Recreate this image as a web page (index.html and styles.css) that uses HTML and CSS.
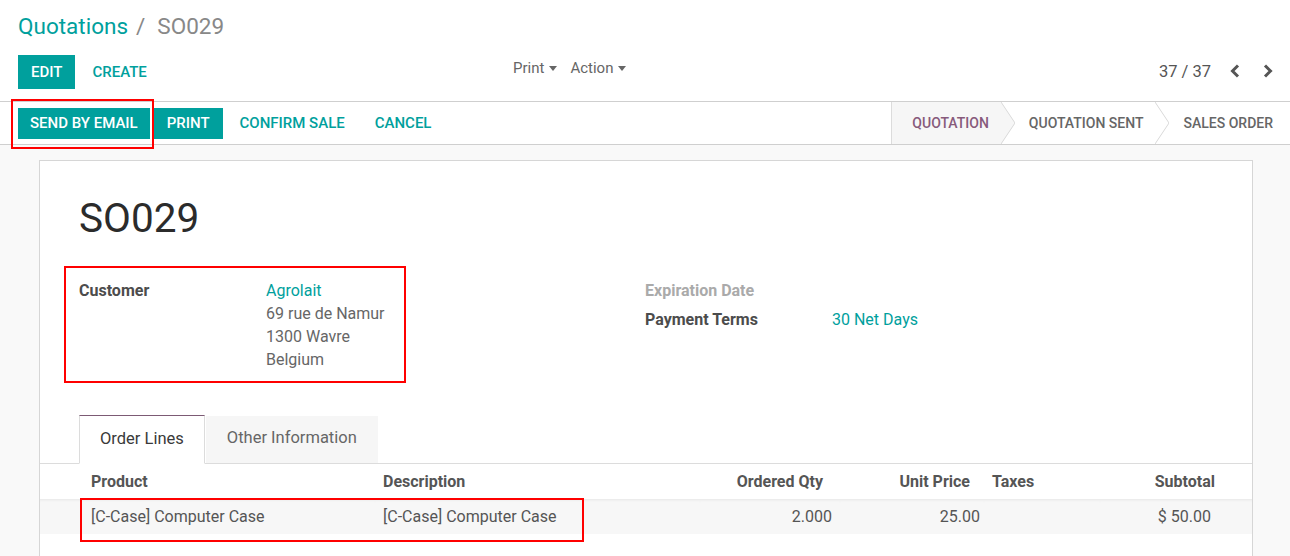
FILE: index.html
```html
<!DOCTYPE html>
<html lang="en">
<head>
<meta charset="utf-8">
<title>Quotations / SO029</title>
<link rel="stylesheet" href="styles.css">
</head>
<body>
<div class="cp">
  <div class="breadcrumb"><a class="crumb-link">Quotations</a><span class="crumb-sep">/</span><span class="crumb-cur">SO029</span></div>
  <div class="cp-bar">
    <div class="cp-left">
      <button class="btn btn-primary btn-tall">Edit</button>
      <button class="btn btn-link btn-tall">Create</button>
    </div>
    <div class="cp-mid">
      <span class="dd">Print<i class="caret"></i></span>
      <span class="dd">Action<i class="caret"></i></span>
    </div>
    <div class="pager">
      <span class="pager-val">37 / 37</span>
      <button class="pager-btn" aria-label="Previous"><svg width="10" height="14" viewBox="0 0 10 14"><polyline points="8,1.5 2.5,7 8,12.5" fill="none" stroke="#555" stroke-width="3"/></svg></button>
      <button class="pager-btn" aria-label="Next"><svg width="10" height="14" viewBox="0 0 10 14"><polyline points="2,1.5 7.5,7 2,12.5" fill="none" stroke="#555" stroke-width="3"/></svg></button>
    </div>
  </div>
</div>
<div class="statusrow">
  <div class="actions">
    <button class="btn btn-primary btn-send">Send by Email</button>
    <button class="btn btn-primary">Print</button>
    <button class="btn btn-link">Confirm Sale</button>
    <button class="btn btn-link">Cancel</button>
  </div>
  <div class="statusbar">
    <div class="stage stage-first active"><span class="stage-txt">Quotation</span><svg class="arrow" width="14" height="42" viewBox="0 0 14 42"><polygon points="0,0 14,21 0,42" fill="#f6f6f6"/><polyline points="0,0 14,21 0,42" fill="none" stroke="#d9d9d9" stroke-width="1"/></svg></div>
    <div class="stage"><span class="stage-txt">Quotation Sent</span><svg class="arrow" width="14" height="42" viewBox="0 0 14 42"><polyline points="0,0 14,21 0,42" fill="none" stroke="#d9d9d9" stroke-width="1"/></svg></div>
    <div class="stage stage-last"><span class="stage-txt">Sales Order</span></div>
  </div>
</div>
<div class="content">
  <div class="sheet">
    <h1 class="title">SO029</h1>
    <div class="groups">
      <div class="group">
        <div class="label">Customer</div>
        <div class="value"><a class="link">Agrolait</a><br>69 rue de Namur<br>1300 Wavre<br>Belgium</div>
      </div>
      <div class="group">
        <div class="label label-empty">Expiration Date</div>
        <div class="value"></div>
        <div class="label">Payment Terms</div>
        <div class="value"><a class="link">30 Net Days</a></div>
      </div>
    </div>
    <div class="notebook">
      <ul class="tabs">
        <li class="tab active">Order Lines</li>
        <li class="tab">Other Information</li>
      </ul>
      <table class="lines">
        <colgroup>
          <col class="c1"><col class="c2"><col class="c3"><col class="c4"><col class="c5"><col class="c6">
        </colgroup>
        <thead>
          <tr>
            <th class="col-first">Product</th>
            <th>Description</th>
            <th class="num num-qty">Ordered Qty</th>
            <th class="num num-price">Unit Price</th>
            <th class="col-tax">Taxes</th>
            <th class="num num-sub">Subtotal</th>
          </tr>
        </thead>
        <tbody>
          <tr>
            <td class="col-first">[C-Case] Computer Case</td>
            <td>[C-Case] Computer Case</td>
            <td class="num num-qty">2.000</td>
            <td class="num num-price">25.00</td>
            <td class="col-tax"></td>
            <td class="num num-sub">$ 50.00</td>
          </tr>
        </tbody>
      </table>
    </div>
  </div>
</div>
<div class="mark mark-send"></div>
<div class="mark mark-customer"></div>
<div class="mark mark-line"></div>
</body>
</html>
```

FILE: styles.css
```css
* { box-sizing: border-box; }
html, body { margin: 0; padding: 0; }
body {
  font-family: Roboto, "Noto Sans", "Liberation Sans", sans-serif;
  color: #4c4c4c;
  background: #fff;
  width: 1290px;
  height: 556px;
  overflow: hidden;
  position: relative;
}

/* control panel */
.cp {
  border-bottom: 1px solid #cfcfcf;
  padding: 0 6px 0 18px;
}
.breadcrumb {
  font-size: 22.5px;
  line-height: 30px;
  padding-top: 11px;
  white-space: nowrap;
}
.crumb-link { color: #00a09d; }
.crumb-sep { color: #888; margin: 0 12px 0 8px; }
.crumb-cur { color: #888; }

.cp-bar {
  display: flex;
  align-items: center;
  height: 34px;
  margin: 13px 0 13px;
}
.cp-left { display: flex; width: 495px; padding-top: 1px; }
.cp-mid { display: flex; align-items: center; color: #666; font-size: 15px; margin-bottom: 6px; }
.dd { display: inline-flex; align-items: center; margin-right: 13px; }
.caret {
  display: inline-block;
  width: 0; height: 0;
  margin-left: 5px;
  border-top: 5px solid #666;
  border-left: 4.5px solid transparent;
  border-right: 4.5px solid transparent;
}
.pager { margin-left: auto; display: flex; align-items: center; }
.pager-val { font-size: 16.5px; color: #555; margin-right: 7px; }
.pager-btn {
  width: 33px; height: 30px;
  border: 0; background: none; padding: 0;
  display: flex; align-items: center; justify-content: center;
}

/* buttons */
.btn {
  font-family: inherit;
  font-size: 15px;
  font-weight: 500;
  text-transform: uppercase;
  border: 0;
  height: 31px;
  padding: 0 13px;
  margin-right: 4px;
  background: none;
  cursor: pointer;
  white-space: nowrap;
}
.btn-tall { height: 34px; }
.btn-primary { background: #00a09d; color: #fff; }
.btn-link { color: #00a09d; }
.actions .btn-send { padding: 0 12px; }

/* status row */
.statusrow {
  display: flex;
  align-items: center;
  height: 43px;
  border-bottom: 1px solid #cfcfcf;
  padding-left: 18px;
}
.actions { display: flex; align-items: center; }
.statusbar {
  margin-left: auto;
  align-self: stretch;
  display: flex;
  border-left: 1px solid #dcdcdc;
}
.stage {
  display: flex;
  align-items: center;
  font-size: 14px;
  font-weight: 500;
  text-transform: uppercase;
  color: #666;
  padding-left: 14px;
}
.stage-first { padding-left: 20px; }
.stage-txt { padding-right: 12px; }
.stage-last .stage-txt { padding-right: 17px; }
.stage.active { background: linear-gradient(to right, #f6f6f6 calc(100% - 14px), transparent calc(100% - 14px)); color: #875a7b; }
.arrow { display: block; }

/* content */
.content {
  background: #f9f9f9;
  padding: 15px 37px 0 39px;
  height: 420px;
}
.sheet {
  background: #fff;
  border: 1px solid #d6d6d6;
  padding: 0 39px;
  height: 600px;
}
.title {
  margin: 33px 0 0;
  font-size: 40.5px;
  line-height: 48px;
  font-weight: 400;
  color: #2b2b2b;
}
.groups {
  display: flex;
  margin-top: 34px;
  font-size: 16px;
  line-height: 23px;
}
.group {
  width: 50%;
  display: grid;
  grid-template-columns: 187px 1fr;
  align-content: start;
}
.group + .group { margin-left: -1px; }
.label, .value { padding: 3px 0; }
.label { font-weight: 700; color: #4c4c4c; }
.label-empty { color: #aaa; }
.value { color: #666; }
.link { color: #00a09d; }

/* notebook */
.notebook { margin: 41px -39px 0; }
.tabs {
  list-style: none;
  margin: 0;
  padding: 0 0 0 39px;
  display: flex;
  border-bottom: 1px solid #dcdcdc;
  height: 49px;
}
.tab {
  font-size: 16.5px;
  line-height: 24px;
  padding: 11px 20px 12px;
  border: 1px solid transparent;
  background-clip: padding-box;
  color: #666;
  background-color: #f6f6f6;
  height: 49px;
}
.tab + .tab { padding: 10px 21px 13px; }
.tab.active {
  background-color: #fff;
  color: #3a3a3a;
  border-color: #dcdcdc;
  border-top-color: #7c5a74;
  border-bottom-color: #fff;
}

.lines {
  width: 100%;
  border-collapse: collapse;
  table-layout: fixed;
  font-size: 16px;
  color: #555;
}
.c1 { width: 335px; }
.c2 { width: 325px; }
.c3 { width: 140px; }
.c4 { width: 144px; }
.c5 { width: 116px; }
.c6 { width: auto; }
.lines th, .lines td {
  padding: 0 8px;
  height: 35px;
  text-align: left;
  white-space: nowrap;
}
.lines th { font-weight: 700; color: #555; }
.lines td {
  background: #f7f7f7;
  box-shadow: inset 0 3px 3px -2px rgba(0,0,0,0.07);
}
.lines .col-first { padding-left: 51px; }
.lines .num { text-align: right; }
.lines th.num-qty { padding-right: 17px; }
.lines td.num-qty { padding-right: 8px; }
.lines th.num-price { padding-right: 14px; }
.lines td.num-price { padding-right: 4px; }
.lines th.num-sub { padding-right: 37px; }
.lines td.num-sub { padding-right: 41px; }

/* annotation boxes */
.mark {
  position: absolute;
  border: 2px solid #f00;
  pointer-events: none;
}
.mark-send { left: 11px; top: 99px; width: 143px; height: 50px; }
.mark-customer { left: 64px; top: 266px; width: 342px; height: 117px; }
.mark-line { left: 80px; top: 498px; width: 504px; height: 44px; }
```
